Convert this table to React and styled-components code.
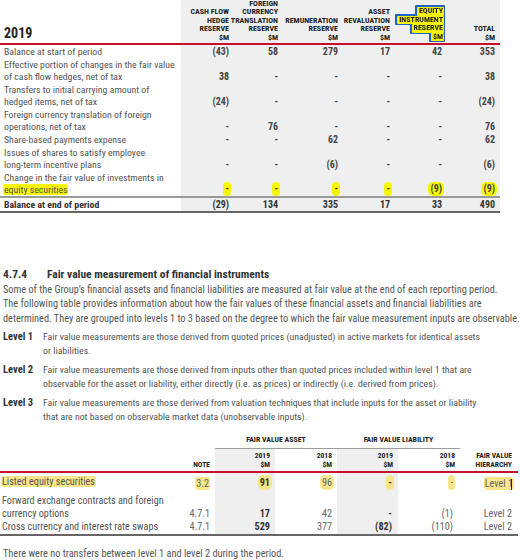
import React from 'react';
import styled, { createGlobalStyle } from 'styled-components';

const FONT = `"Liberation Sans Narrow", "Roboto Condensed", "Liberation Sans", Arial, sans-serif`;
const GREY = '#efefef';
const RED = '#c8102e';

const Global = createGlobalStyle`
  html, body { margin: 0; padding: 0; background: #fff; }
  body { font-family: ${FONT}; color: #555; width: 520px; height: 560px; overflow: hidden; }
`;

const Page = styled.div`
  width: 520px;
  display: flex;
  flex-direction: column;
`;

/* ---------- table 1 ---------- */
const Table1 = styled.div`
  width: 500px;
  display: grid;
  grid-template-columns: 181px 52px 49px 60px 52px 52px 54px;
`;

const TitleCell = styled.div`
  align-self: end;
  padding: 0 0 2px 4px;
  font-size: 14px;
  font-weight: 700;
  color: #222;
  line-height: 15px;
`;

const ColHead = styled.div`
  background: ${GREY};
  display: flex;
  flex-direction: column;
  align-items: flex-end;
  justify-content: flex-end;
  text-align: right;
  padding: 2px ${(p) => p.$pr ?? 4}px 1px 0;
  font-size: 8px;
  font-weight: 700;
  line-height: 8.5px;
  color: #222;
  text-transform: uppercase;
  height: 43px;
  box-sizing: border-box;
`;

const EqBox = styled.div`
  display: flex;
  flex-direction: column;
  align-items: flex-end;
  margin-bottom: 1px;
  filter: drop-shadow(1.5px 0 0 #1d63c8) drop-shadow(-1.5px 0 0 #1d63c8)
    drop-shadow(0 1.5px 0 #1d63c8) drop-shadow(0 -1.5px 0 #1d63c8);
`;

const EqLine = styled.span`
  background: #f4f400;
  padding: 0 1px 0 2px;
  border-radius: 1px;
`;

const Rule = styled.div`
  grid-column: 1 / -1;
  height: ${(p) => p.$h ?? 2}px;
  background: ${(p) => p.$color};
`;

const Label = styled.div`
  padding: ${(p) => p.$pad ?? '1px 0 0 4px'};
  font-size: ${(p) => p.$size ?? 9.8}px;
  line-height: ${(p) => p.$lh ?? 12}px;
  font-weight: ${(p) => (p.$bold ? 700 : 400)};
  color: ${(p) => (p.$bold ? '#333' : '#555')};
  white-space: nowrap;
`;

const Num = styled.div`
  background: ${(p) => (p.$shade ? GREY : 'transparent')};
  display: flex;
  align-items: flex-end;
  justify-content: flex-end;
  padding: ${(p) => p.$pad ?? '1px 4px 0 0'};
  font-size: ${(p) => p.$size ?? 10}px;
  line-height: ${(p) => p.$lh ?? 12}px;
  font-weight: ${(p) => (p.$bold ? 700 : 400)};
  color: ${(p) => p.$color ?? '#444'};
`;

const Hl = styled.span`
  background: ${(p) => (p.$pale ? '#f8e58c' : '#f6f600')};
  border-radius: ${(p) => (p.$pill ? 5 : 3)}px;
  padding: ${(p) => (p.$pill ? '1px 2px' : '0 1px')};
  margin: ${(p) => (p.$pill ? '0 -2px 0 0' : '0 0 0 -1px')};
`;

const Caret = styled.span`
  display: inline-block;
  width: 1px;
  height: 11px;
  background: #222;
  vertical-align: -2px;
  margin-left: -3px;
`;

/* ---------- section 2 ---------- */
const Section = styled.section`
  margin-top: 54px;
  display: flex;
  flex-direction: column;
`;

const Heading = styled.h2`
  margin: 0;
  display: flex;
  font-size: 11.5px;
  line-height: 15px;
  font-weight: 700;
  color: #333;
  padding-left: 3px;
`;

const HNum = styled.span`
  width: 44px;
`;

const Para = styled.p`
  margin: 1px 0 0;
  padding-left: 3px;
  font-size: 10.3px;
  line-height: 14.5px;
  color: #555;
  white-space: nowrap;
`;

const Levels = styled.div`
  display: flex;
  flex-direction: column;
  gap: 5px;
  margin-top: 4px;
`;

const LevelItem = styled.div`
  display: grid;
  grid-template-columns: 40px 1fr;
  padding-left: 3px;
  font-size: 9.8px;
  line-height: 14px;
  color: #555;
  white-space: nowrap;
`;

const LevelTag = styled.span`
  font-weight: 700;
  font-size: 10.5px;
  color: #333;
`;

/* ---------- table 2 ---------- */
const Table2 = styled.div`
  margin-top: 11px;
  width: 518px;
  display: grid;
  grid-template-columns: 180px 35px 60px 62px 61px 62px 58px;
`;

const Blank = styled.div``;

const GroupHead = styled.div`
  grid-column: span 2;
  text-align: center;
  font-size: 7.8px;
  font-weight: 700;
  line-height: 9px;
  color: #222;
  padding: 0 0 4px;
  border-bottom: 1px solid #9c9c9c;
`;

const SubHead = styled.div`
  background: ${(p) => (p.$shade ? GREY : 'transparent')};
  display: flex;
  flex-direction: column;
  align-items: flex-end;
  justify-content: flex-end;
  text-align: right;
  padding: 3px ${(p) => p.$pr ?? 5}px 2px 0;
  font-size: 7.6px;
  font-weight: 700;
  line-height: 8.5px;
  color: #222;
`;

const Footnote = styled.p`
  margin: 11px 0 0;
  padding-left: 3px;
  font-size: 10.3px;
  line-height: 14px;
  color: #555;
`;

const rows1 = [
  { label: ['Balance at start of period'], vals: ['(43)', '58', '279', '17', '42', '353'] },
  {
    label: ['Effective portion of changes in the fair value', 'of cash flow hedges, net of tax'],
    vals: ['38', '-', '-', '-', '-', '38'],
  },
  {
    label: ['Transfers to initial carrying amount of', 'hedged items, net of tax'],
    vals: ['(24)', '-', '-', '-', '-', '(24)'],
  },
  {
    label: ['Foreign currency translation of foreign', 'operations, net of tax'],
    vals: ['-', '76', '-', '-', '-', '76'],
  },
  { label: ['Share-based payments expense'], vals: ['-', '-', '62', '-', '-', '62'] },
  {
    label: ['Issues of shares to satisfy employee', 'long-term incentive plans'],
    vals: ['-', '-', '(6)', '-', '-', '(6)'],
  },
];

const heads1 = [
  ['Cash flow', 'hedge', 'reserve', '$M'],
  ['Foreign', 'currency', 'translation', 'reserve', '$M'],
  ['Remuneration', 'reserve', '$M'],
  ['Asset', 'revaluation', 'reserve', '$M'],
  null,
  ['Total', '$M'],
];

const lines = (arr) =>
  arr.map((l, i) => (
    <React.Fragment key={i}>
      {i > 0 && <br />}
      {l}
    </React.Fragment>
  ));

const lastPad = (i) => (i === 5 ? '1px 5px 0 0' : undefined);

export default function App() {
  return (
    <Page>
      <Global />
      <Table1>
        <TitleCell>2019</TitleCell>
        {heads1.map((h, i) =>
          h ? (
            <ColHead key={i} $pr={i === 5 ? 5 : 4}>
              {h.map((t) => (
                <span key={t}>{t}</span>
              ))}
            </ColHead>
          ) : (
            <ColHead key={i} $pr={2}>
              <EqBox>
                <EqLine>EQUITY</EqLine>
                <EqLine>INSTRUMENT</EqLine>
                <EqLine>RESERVE</EqLine>
                <EqLine>$M</EqLine>
              </EqBox>
            </ColHead>
          )
        )}
        <Rule $color={RED} />
        {rows1.map((r, ri) => (
          <React.Fragment key={ri}>
            <Label>{lines(r.label)}</Label>
            {r.vals.map((v, vi) => (
              <Num key={vi} $shade $bold $pad={lastPad(vi)}>
                {v}
              </Num>
            ))}
          </React.Fragment>
        ))}
        <Label>
          Change in the fair value of investments in
          <br />
          <Hl>equity securities</Hl>
        </Label>
        {['-', '-', '-', '-', '(9)', '(9)'].map((v, vi) => (
          <Num key={vi} $shade $bold $pad={lastPad(vi)}>
            <Hl $pill>{v}</Hl>
          </Num>
        ))}
        <Rule $color="#9a9a9a" />
        <Label $bold>Balance at end of period</Label>
        {['(29)', '134', '335', '17', '33', '490'].map((v, vi) => (
          <Num key={vi} $shade $bold $color="#333" $pad={lastPad(vi)}>
            {v}
          </Num>
        ))}
        <Rule $color="#666" $h={1.5} />
      </Table1>

      <Section>
        <Heading>
          <HNum>4.7.4</HNum>
          <span>Fair value measurement of financial instruments</span>
        </Heading>
        <Para>
          Some of the Group’s financial assets and financial liabilities are measured at fair value at the end of each reporting period.
          <br />
          The following table provides information about how the fair values of these financial assets and financial liabilities are
          <br />
          determined. They are grouped into levels 1 to 3 based on the degree to which the fair value measurement inputs are observable.
        </Para>
        <Levels>
          <LevelItem>
            <LevelTag>Level 1</LevelTag>
            <span>
              Fair value measurements are those derived from quoted prices (unadjusted) in active markets for identical assets
              <br />
              or liabilities.
            </span>
          </LevelItem>
          <LevelItem>
            <LevelTag>Level 2</LevelTag>
            <span>
              Fair value measurements are those derived from inputs other than quoted prices included within level 1 that are
              <br />
              observable for the asset or liability, either directly (i.e. as prices) or indirectly (i.e. derived from prices).
            </span>
          </LevelItem>
          <LevelItem>
            <LevelTag>Level 3</LevelTag>
            <span>
              Fair value measurements are those derived from valuation techniques that include inputs for the asset or liability
              <br />
              that are not based on observable market data (unobservable inputs).
            </span>
          </LevelItem>
        </Levels>

        <Table2>
          <Blank />
          <Blank />
          <GroupHead>FAIR VALUE ASSET</GroupHead>
          <GroupHead>FAIR VALUE LIABILITY</GroupHead>
          <Blank />

          <Blank />
          <SubHead>NOTE</SubHead>
          <SubHead $shade>
            <span>2019</span>
            <span>$M</span>
          </SubHead>
          <SubHead>
            <span>2018</span>
            <span>$M</span>
          </SubHead>
          <SubHead $shade>
            <span>2019</span>
            <span>$M</span>
          </SubHead>
          <SubHead>
            <span>2018</span>
            <span>$M</span>
          </SubHead>
          <SubHead $pr={6}>
            <span>FAIR VALUE</span>
            <span>HIERARCHY</span>
          </SubHead>
          <Rule $color={RED} />

          <Label $pad="2px 0 2px 2px" $size={10.2} $lh={13}>
            <Hl $pale>Listed equity securities</Hl>
          </Label>
          <Num $pad="2px 5px 2px 0" $size={10.2} $lh={13} $color="#666">
            <Hl $pale>3.2</Hl>
          </Num>
          <Num $shade $bold $pad="2px 5px 2px 0" $size={10.2} $lh={13} $color="#333">
            <Hl $pale $pill>91</Hl>
          </Num>
          <Num $pad="2px 5px 2px 0" $size={10.2} $lh={13} $color="#666">
            <Hl $pale $pill>96</Hl>
          </Num>
          <Num $shade $bold $pad="2px 6px 2px 0" $size={10.2} $lh={13} $color="#333">
            <Hl $pale $pill>-</Hl>
          </Num>
          <Num $pad="2px 7px 2px 0" $size={10.2} $lh={13} $color="#666">
            <Hl $pale $pill>-</Hl>
          </Num>
          <Num $pad="2px 6px 2px 0" $size={10.2} $lh={13} $color="#666">
            <Hl $pale>Level 1</Hl>
            <Caret />
          </Num>

          <Label $pad="2px 0 0 2px" $size={10.2} $lh={13}>
            Forward exchange contracts and foreign
            <br />
            currency options
          </Label>
          <Num $pad="2px 5px 0 0" $size={10.2} $lh={13} $color="#666">4.7.1</Num>
          <Num $shade $bold $pad="2px 5px 0 0" $size={10.2} $lh={13} $color="#333">17</Num>
          <Num $pad="2px 5px 0 0" $size={10.2} $lh={13} $color="#666">42</Num>
          <Num $shade $bold $pad="2px 6px 0 0" $size={10.2} $lh={13} $color="#333">-</Num>
          <Num $pad="2px 7px 0 0" $size={10.2} $lh={13} $color="#666">(1)</Num>
          <Num $pad="2px 6px 0 0" $size={10.2} $lh={13} $color="#666">Level 2</Num>

          <Label $pad="0 0 1px 2px" $size={10.2} $lh={13}>
            Cross currency and interest rate swaps
          </Label>
          <Num $pad="0 5px 1px 0" $size={10.2} $lh={13} $color="#666">4.7.1</Num>
          <Num $shade $bold $pad="0 5px 1px 0" $size={10.2} $lh={13} $color="#333">529</Num>
          <Num $pad="0 5px 1px 0" $size={10.2} $lh={13} $color="#666">377</Num>
          <Num $shade $bold $pad="0 6px 1px 0" $size={10.2} $lh={13} $color="#333">(82)</Num>
          <Num $pad="0 7px 1px 0" $size={10.2} $lh={13} $color="#666">(110)</Num>
          <Num $pad="0 6px 1px 0" $size={10.2} $lh={13} $color="#666">Level 2</Num>
          <Rule $color="#666" />
        </Table2>

        <Footnote>There were no transfers between level 1 and level 2 during the period.</Footnote>
      </Section>
    </Page>
  );
}
